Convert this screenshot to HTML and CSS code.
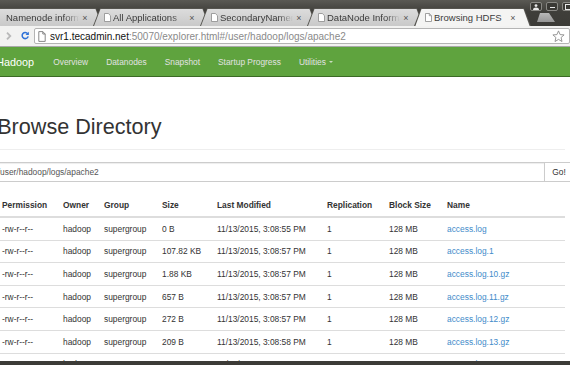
FILE: index.html
```html
<!DOCTYPE html>
<html>
<head>
<meta charset="utf-8">
<title>Browsing HDFS</title>
<link rel="stylesheet" href="styles.css">
</head>
<body>
<div class="window">
  <div class="tabstrip">
    <div class="tabs">
      <div class="tab first">
        <svg class="favicon" width="7" height="9" viewBox="0 0 7 9"><path d="M0.5 0.5H4.3L6.5 2.7V8.5H0.5Z" fill="#fff" stroke="#8a8a8a" stroke-width="0.8"/></svg>
        <span class="title">Namenode information</span><span class="close">×</span>
      </div>
      <div class="tab">
        <svg class="favicon" width="7" height="9" viewBox="0 0 7 9"><path d="M0.5 0.5H4.3L6.5 2.7V8.5H0.5Z" fill="#fff" stroke="#8a8a8a" stroke-width="0.8"/></svg>
        <span class="title">All Applications</span><span class="close">×</span>
      </div>
      <div class="tab">
        <svg class="favicon" width="7" height="9" viewBox="0 0 7 9"><path d="M0.5 0.5H4.3L6.5 2.7V8.5H0.5Z" fill="#fff" stroke="#8a8a8a" stroke-width="0.8"/></svg>
        <span class="title">SecondaryNamenode information</span><span class="close">×</span>
      </div>
      <div class="tab">
        <svg class="favicon" width="7" height="9" viewBox="0 0 7 9"><path d="M0.5 0.5H4.3L6.5 2.7V8.5H0.5Z" fill="#fff" stroke="#8a8a8a" stroke-width="0.8"/></svg>
        <span class="title">DataNode Information</span><span class="close">×</span>
      </div>
      <div class="tab active">
        <svg class="favicon" width="7" height="9" viewBox="0 0 7 9"><path d="M0.5 0.5H4.3L6.5 2.7V8.5H0.5Z" fill="#fff" stroke="#8a8a8a" stroke-width="0.8"/><path d="M4.3 0.5V2.7H6.5" fill="none" stroke="#8a8a8a" stroke-width="0.8"/></svg>
        <span class="title plain">Browsing HDFS</span><span class="close">×</span>
      </div>
    </div>
    <div class="newtab"></div>
    <div class="wincontrols">
      <span class="wbtn"><svg width="8" height="6" viewBox="0 0 8 6"><circle cx="4" cy="1.6" r="1.4" fill="#e8e8e8"/><path d="M1 6C1 4 2.5 3.4 4 3.4S7 4 7 6Z" fill="#e8e8e8"/></svg></span>
      <span class="wbtn"><span class="minus"></span></span>
      <span class="wbtn"><span class="maxbox"></span></span>
    </div>
  </div>

  <div class="toolbar">
    <svg class="fwd" width="7" height="10" viewBox="0 0 7 10"><path d="M1.2 1L5.2 5L1.2 9" fill="none" stroke="#b9b9b9" stroke-width="2.2"/></svg>
    <svg class="reload" width="10" height="11" viewBox="0 0 10 11"><path d="M8.1 3.4A3.7 3.7 0 1 0 8.7 6.6" fill="none" stroke="#2f72d8" stroke-width="1.9"/><path d="M9.6 0.8V5H5.4Z" fill="#2f72d8"/></svg>
    <div class="omnibox">
      <svg class="pageicon" width="8" height="11" viewBox="0 0 8 11"><path d="M0.8 0.6H4.8L7.2 3V10.4H0.8Z" fill="#fff" stroke="#7b7b7b" stroke-width="0.9"/><path d="M4.8 0.6V3H7.2" fill="none" stroke="#7b7b7b" stroke-width="0.9"/></svg>
      <span class="url"><span class="host">svr1.tecadmin.net</span><span class="rest">:50070/explorer.html#/user/hadoop/logs/apache2</span></span>
      <svg class="star" width="13" height="13" viewBox="0 0 13 13"><path d="M6.5 0.9L8.1 4.6L12.1 4.9L9.1 7.5L10 11.5L6.5 9.4L3 11.5L3.9 7.5L0.9 4.9L4.9 4.6Z" fill="#fff" stroke="#8c8c8c" stroke-width="0.9" stroke-linejoin="round"/></svg>
    </div>
  </div>

  <div class="viewport">
    <nav class="navbar">
      <span class="brand">Hadoop</span>
      <ul class="nav">
        <li>Overview</li>
        <li>Datanodes</li>
        <li>Snapshot</li>
        <li>Startup Progress</li>
        <li>Utilities <span class="caret"></span></li>
      </ul>
    </nav>
    <div class="container">
      <div class="page-header"><h1>Browse Directory</h1></div>
      <div class="input-group">
        <input class="form-control" type="text" value="/user/hadoop/logs/apache2">
        <button class="btn" type="button">Go!</button>
      </div>
      <table class="table">
        <colgroup>
          <col class="c-perm"><col class="c-owner"><col class="c-group"><col class="c-size"><col class="c-mod"><col class="c-rep"><col class="c-block"><col class="c-name">
        </colgroup>
        <thead>
          <tr><th>Permission</th><th>Owner</th><th>Group</th><th>Size</th><th>Last Modified</th><th>Replication</th><th>Block Size</th><th>Name</th></tr>
        </thead>
        <tbody>
          <tr><td>-rw-r--r--</td><td>hadoop</td><td>supergroup</td><td>0 B</td><td>11/13/2015, 3:08:55 PM</td><td>1</td><td>128 MB</td><td><a href="#">access.log</a></td></tr>
          <tr><td>-rw-r--r--</td><td>hadoop</td><td>supergroup</td><td>107.82 KB</td><td>11/13/2015, 3:08:57 PM</td><td>1</td><td>128 MB</td><td><a href="#">access.log.1</a></td></tr>
          <tr><td>-rw-r--r--</td><td>hadoop</td><td>supergroup</td><td>1.88 KB</td><td>11/13/2015, 3:08:57 PM</td><td>1</td><td>128 MB</td><td><a href="#">access.log.10.gz</a></td></tr>
          <tr><td>-rw-r--r--</td><td>hadoop</td><td>supergroup</td><td>657 B</td><td>11/13/2015, 3:08:57 PM</td><td>1</td><td>128 MB</td><td><a href="#">access.log.11.gz</a></td></tr>
          <tr><td>-rw-r--r--</td><td>hadoop</td><td>supergroup</td><td>272 B</td><td>11/13/2015, 3:08:57 PM</td><td>1</td><td>128 MB</td><td><a href="#">access.log.12.gz</a></td></tr>
          <tr><td>-rw-r--r--</td><td>hadoop</td><td>supergroup</td><td>209 B</td><td>11/13/2015, 3:08:58 PM</td><td>1</td><td>128 MB</td><td><a href="#">access.log.13.gz</a></td></tr>
          <tr><td>-rw-r--r--</td><td>hadoop</td><td>supergroup</td><td>501 B</td><td>11/13/2015, 3:08:58 PM</td><td>1</td><td>128 MB</td><td><a href="#">access.log.14.gz</a></td></tr>
        </tbody>
      </table>
    </div>
  </div>
  <div class="bottombar"></div>
</div>
</body>
</html>
```

FILE: styles.css
```css
html, body {
  margin: 0;
  padding: 0;
}
body {
  width: 570px;
  height: 365px;
  overflow: hidden;
  background: #3c3b37;
  font-family: "Liberation Sans", Arial, sans-serif;
}
.window {
  display: flex;
  flex-direction: column;
  height: 365px;
  width: 570px;
  overflow: hidden;
}

/* ---------- tab strip ---------- */
.tabstrip {
  position: relative;
  height: 26px;
  flex: none;
  display: flex;
  align-items: flex-end;
  background: linear-gradient(#5a5954, #3f3e3a 45%, #3c3b37);
}
.tabs {
  display: flex;
  margin-left: -14px;
}
.tab {
  position: relative;
  isolation: isolate;
  width: 117px;
  height: 18px;
  margin-right: -10px;
  box-sizing: border-box;
  padding: 1px 14px 0 11px;
  display: flex;
  align-items: center;
  font-size: 9.5px;
  color: #3a3a3a;
  background: #55544f;
  clip-path: polygon(0 100%, 7px 0, calc(100% - 7px) 0, 100% 100%);
}
.tab::before {
  content: "";
  position: absolute;
  left: 1px;
  right: 1px;
  top: 1px;
  bottom: 0;
  z-index: -1;
  background: linear-gradient(#dcdcdc, #c9c9c9);
  clip-path: polygon(0 100%, 6.5px 0, calc(100% - 6.5px) 0, 100% 100%);
}
.tab.active {
  z-index: 5;
  color: #3c3c3c;
}
.tab.active::before {
  background: #f4f4f3;
  bottom: -1px;
}
.tab.first .favicon {
  visibility: hidden;
}
.favicon {
  flex: none;
  margin-right: 2px;
}
.title {
  flex: 1;
  min-width: 0;
  margin-right: 2px;
  white-space: nowrap;
  overflow: hidden;
  -webkit-mask-image: linear-gradient(to right, #000 80%, transparent 100%);
  mask-image: linear-gradient(to right, #000 80%, transparent 100%);
}
.title.plain {
  -webkit-mask-image: none;
  mask-image: none;
}
.close {
  flex: none;
  width: 8px;
  text-align: center;
  font-size: 9px;
  color: #555;
}
.newtab {
  width: 18px;
  height: 9px;
  margin: 0 0 4px 16px;
  background: linear-gradient(#b8b8b8, #969696);
  clip-path: polygon(3px 0, calc(100% - 6px) 0, 100% 100%, 0 100%);
}
.wincontrols {
  position: absolute;
  top: 2px;
  right: -4px;
  display: flex;
  gap: 4px;
}
.wbtn {
  width: 12px;
  height: 9px;
  box-sizing: border-box;
  border: 1px solid #8a8985;
  border-radius: 2px;
  background: #3a3935;
  display: flex;
  align-items: center;
  justify-content: center;
}
.minus {
  width: 5px;
  height: 1px;
  background: #e8e8e8;
  margin-top: 2px;
}
.maxbox {
  width: 5px;
  height: 4px;
  border: 1px solid #e8e8e8;
}

/* ---------- toolbar ---------- */
.toolbar {
  flex: none;
  height: 20px;
  border-bottom: 1px solid #a9a9a9;
  background: #f2f2f1;
  display: flex;
  align-items: flex-start;
}
.fwd {
  margin: 5px 0 0 6px;
}
.reload {
  margin: 4px 0 0 9px;
}
.omnibox {
  flex: none;
  margin: 2px 0 0 5px;
  width: 536px;
  height: 16px;
  box-sizing: border-box;
  border: 1px solid #b4b4b4;
  border-radius: 2px;
  background: #fff;
  display: flex;
  align-items: center;
  padding-left: 3px;
}
.pageicon {
  flex: none;
}
.url {
  margin-left: 4px;
  font-size: 10px;
  white-space: nowrap;
  flex: 1;
}
.host {
  color: #111;
}
.rest {
  color: #8a8a8a;
}
.star {
  flex: none;
  margin-right: 4px;
}

/* ---------- page ---------- */
.viewport {
  flex: none;
  height: 314px;
  background: #fff;
  overflow: hidden;
  color: #333;
}
.navbar {
  height: 29px;
  border-bottom: 1px solid #3b6a25;
  background: #5fa33e;
  display: flex;
  align-items: center;
}
.brand {
  margin-left: -3.8px;
  padding-right: 10.2px;
  font-size: 10.8px;
  color: #fff;
}
.nav {
  list-style: none;
  margin: 0;
  padding: 0;
  display: flex;
}
.nav li {
  padding: 0 9px;
  font-size: 8.4px;
  color: #e2e2e2;
  display: flex;
  align-items: center;
}
.caret {
  display: inline-block;
  width: 0;
  height: 0;
  margin-left: 3px;
  border-top: 2.4px solid #c9dcbf;
  border-left: 2.4px solid transparent;
  border-right: 2.4px solid transparent;
}
.container {
  margin-left: -2.8px;
  width: 567.8px;
}
.page-header {
  margin-top: 38.2px;
  padding-bottom: 10px;
  border-bottom: 1px solid #eeeeee;
}
.page-header h1 {
  margin: 0;
  font-size: 21.6px;
  line-height: 23.76px;
  font-weight: normal;
  color: #333;
}
.input-group {
  display: flex;
  margin: 12px 0 0 -7.7px;
  width: 590px;
  height: 20.4px;
}
.form-control {
  width: 555.5px;
  flex: none;
  height: 20.4px;
  box-sizing: border-box;
  border: 1px solid #cccccc;
  padding: 0 7.2px;
  font-family: inherit;
  font-size: 8.4px;
  color: #555;
  box-shadow: inset 0 1px 1px rgba(0,0,0,0.075);
  outline: none;
}
.btn {
  flex: none;
  height: 20.4px;
  box-sizing: border-box;
  margin-left: -1px;
  border: 1px solid #cccccc;
  background: #fff;
  padding: 0 7.2px;
  font-family: inherit;
  font-size: 8.4px;
  color: #333;
}
.table {
  margin-top: 12px;
  width: 567.8px;
  table-layout: fixed;
  border-collapse: collapse;
  font-size: 8.4px;
  line-height: 12px;
}
.c-perm { width: 61px; }
.c-owner { width: 41px; }
.c-group { width: 58px; }
.c-size { width: 55px; }
.c-mod { width: 110px; }
.c-rep { width: 62px; }
.c-block { width: 58px; }
.c-name { width: 122.8px; }
.table th {
  text-align: left;
  font-weight: bold;
  padding: 4.8px;
  border-bottom: 2px solid #dddddd;
  white-space: nowrap;
}
.table td {
  padding: 4.8px;
  border-top: 1px solid #dddddd;
  white-space: nowrap;
}
.table a {
  color: #428bca;
  text-decoration: none;
}
.bottombar {
  flex: 1;
  background: #3c3b37;
}
```
